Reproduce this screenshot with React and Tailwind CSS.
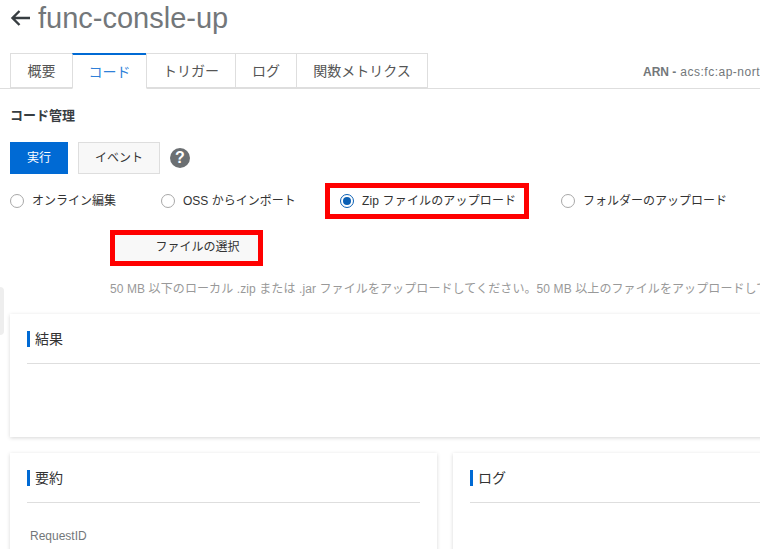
import React from 'react';

const font = { sans: "font-['Liberation_Sans','Noto_Sans_CJK_JP',sans-serif]" };

const tabs = [
  { label: '概要', width: 'w-[63px]' },
  { label: 'コード', width: 'w-[75px]', active: true },
  { label: 'トリガー', width: 'w-[90px]' },
  { label: 'ログ', width: 'w-[62px]' },
  { label: '関数メトリクス', width: 'w-[132px]' },
];

const Radio = ({ checked }) => (
  <span
    className={`flex h-[14px] w-[14px] shrink-0 items-center justify-center rounded-full border bg-white ${
      checked ? 'border-[#0a5fb4]' : 'border-[#a8a8a8]'
    }`}
  >
    {checked && <span className="h-2 w-2 rounded-full bg-[#0a5fb4]" />}
  </span>
);

const Heading = ({ children }) => (
  <div className="flex h-[33px] items-start border-b border-[#dedede]">
    <span className="h-4 w-[3px] bg-[#006ad4]" />
    <span className="ml-[5px] text-sm leading-4 text-[#333]">{children}</span>
  </div>
);

export default function App() {
  return (
    <div className={`relative h-[549px] w-[760px] overflow-hidden bg-white ${font.sans}`}>
      <div className="absolute left-0 top-[287px] h-[48px] w-[4px] rounded-r bg-[#eeeeee]" />

      <div className="flex h-[53px] items-start pl-[10px] pt-[2px]">
        <svg className="mt-[6px] h-[20px] w-[20px] shrink-0 text-[#373d41]" viewBox="0 0 20 20" fill="none" stroke="currentColor" strokeWidth="2.4">
          <path d="M20 10H2M9.5 3L2.5 10l7 7" />
        </svg>
        <span className="ml-[8px] text-[29px] leading-[32px] text-[#73777a]">func-consle-up</span>
      </div>

      <div className="flex h-[36px] border-b border-[#dedede] pl-[10px]">
        {tabs.map((tab) => (
          <div
            key={tab.label}
            className={`-mr-px flex shrink-0 items-center justify-center border text-sm ${tab.width} ${
              tab.active
                ? 'h-[36px] border-[#dedede] border-t-2 border-t-[#006ad4] border-b-white bg-white text-[#2f80d8]'
                : 'h-[35px] border-[#dedede] bg-white text-[#555]'
            }`}
          >
            {tab.label}
          </div>
        ))}
        <div className="ml-[216px] flex shrink-0 items-center whitespace-nowrap pt-[2px] text-xs text-[#73777a]">
          <span className="font-bold">ARN -</span>
          <span className="ml-1 tracking-[0.5px]">acs:fc:ap-northeast-1</span>
        </div>
      </div>

      <div className="pl-[10px]">
        <div className="mt-[18px] text-[13px] font-bold leading-[18px] text-[#373d41]">コード管理</div>

        <div className="mt-[17px] flex items-center">
          <button className="h-8 w-[58px] bg-[#006ad4] text-xs text-white">実行</button>
          <button className="ml-[10px] h-8 w-[82px] border border-[#dedede] bg-[#f8f8f8] text-xs text-[#333]">イベント</button>
          <span className="ml-[10px] flex h-5 w-5 items-center justify-center rounded-full bg-[#6b6f72] text-base font-bold text-white">?</span>
        </div>

        <div className="mt-[9px] flex h-[36px] items-center whitespace-nowrap text-xs text-[#333]">
          <div className="flex w-[151px] items-center gap-2">
            <Radio />
            <span>オンライン編集</span>
          </div>
          <div className="flex w-[164px] items-center gap-2">
            <Radio />
            <span>OSS からインポート</span>
          </div>
          <div className="flex h-[36px] w-[204px] items-center gap-2 border-[5px] border-[#ff0000] pl-[10px]">
            <Radio checked />
            <span className="tracking-[0.15px]">Zip ファイルのアップロード</span>
          </div>
          <div className="ml-[32px] flex items-center gap-2">
            <Radio />
            <span>フォルダーのアップロード</span>
          </div>
        </div>

        <div className="ml-[100px] mt-[11px] flex h-[36px] w-[153px] items-center justify-center border-[5px] border-[#ff0000] bg-[#f8f8f8] pb-[3px] pl-[22px] text-xs text-[#333]">
          ファイルの選択
        </div>

        <p className="ml-[100px] mt-[14px] whitespace-nowrap text-xs leading-[18px] tracking-[0.1px] text-[#999]">
          50 MB 以下のローカル .zip または .jar ファイルをアップロードしてください。50 MB 以上のファイルをアップロードしてください
        </p>

        <section className="mt-[16px] h-[123px] w-[800px] bg-white px-[17px] pt-[17px] shadow-[0_1px_4px_rgba(0,0,0,0.16)]">
          <Heading>結果</Heading>
        </section>

        <div className="mt-4 flex gap-4">
          <section className="h-[120px] w-[427px] shrink-0 bg-white px-[17px] pt-[17px] shadow-[0_1px_4px_rgba(0,0,0,0.16)]">
            <Heading>要約</Heading>
            <div className="mt-[25px] pl-[3px] text-xs text-[#73777a]">RequestID</div>
          </section>
          <section className="h-[120px] w-[400px] shrink-0 bg-white px-[17px] pt-[17px] shadow-[0_1px_4px_rgba(0,0,0,0.16)]">
            <Heading>ログ</Heading>
          </section>
        </div>
      </div>
    </div>
  );
}
